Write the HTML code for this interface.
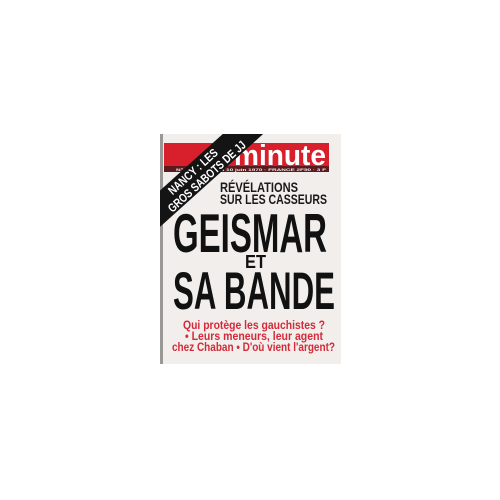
<!DOCTYPE html>
<html><head><meta charset="utf-8"><style>
html,body{margin:0;padding:0;background:#fff;width:500px;height:500px;overflow:hidden}
</style></head><body>
<svg width="500" height="500" viewBox="0 0 500 500" xmlns="http://www.w3.org/2000/svg" font-family="Liberation Sans, sans-serif" font-weight="bold">
<defs><clipPath id="c"><rect x="160" y="134" width="181" height="230"/></clipPath></defs>
<rect x="0" y="0" width="500" height="500" fill="#fff"/>
<rect x="160" y="134" width="181" height="230" fill="#f1eeeb"/>
<rect x="160" y="134" width="3" height="230" fill="#9a9896"/>
<rect x="164" y="143" width="165" height="24" fill="#d8202c"/>
<rect x="164" y="166" width="165" height="6" fill="#5a1a1e"/>
<text x="176" y="171" font-size="4" fill="#eee" textLength="150" lengthAdjust="spacingAndGlyphs">N° 435 · Du 4 au 10 juin 1970 · FRANCE 2F50 · 3 F</text>
<text x="234" y="165" font-size="29" fill="#fff" textLength="92" lengthAdjust="spacingAndGlyphs">minute</text>
<g clip-path="url(#c)">
<g transform="translate(200,172) rotate(-42)">
<rect x="-90" y="-13" width="180" height="27" fill="#141414"/>
<text x="-36" y="-1" font-size="12" fill="#fff" textLength="62" lengthAdjust="spacingAndGlyphs">NANCY : LES</text>
<text x="-48" y="12" font-size="12" fill="#fff" textLength="100" lengthAdjust="spacingAndGlyphs">GROS SABOTS DE JJ</text>
</g>
</g>
<text x="220" y="192" font-size="14" fill="#1a1a1a" textLength="78" lengthAdjust="spacingAndGlyphs">RÉVÉLATIONS</text>
<text x="220" y="204" font-size="14" fill="#1a1a1a" textLength="107" lengthAdjust="spacingAndGlyphs">SUR LES CASSEURS</text>
<text x="173" y="252" font-size="55" fill="#111" textLength="154" lengthAdjust="spacingAndGlyphs">GEISMAR</text>
<text x="245" y="268" font-size="18" fill="#111" textLength="21" lengthAdjust="spacingAndGlyphs">ET</text>
<text x="173" y="309" font-size="53" fill="#111" textLength="162" lengthAdjust="spacingAndGlyphs">SA BANDE</text>
<text x="183" y="329" font-size="12" fill="#d42a3a" textLength="142" lengthAdjust="spacingAndGlyphs">Qui protège les gauchistes ?</text>
<text x="185" y="340" font-size="12" fill="#d42a3a" textLength="138" lengthAdjust="spacingAndGlyphs">• Leurs meneurs, leur agent</text>
<text x="172" y="351" font-size="12" fill="#d42a3a" textLength="163" lengthAdjust="spacingAndGlyphs">chez Chaban • D'où vient l'argent?</text>
</svg>
</body></html>
